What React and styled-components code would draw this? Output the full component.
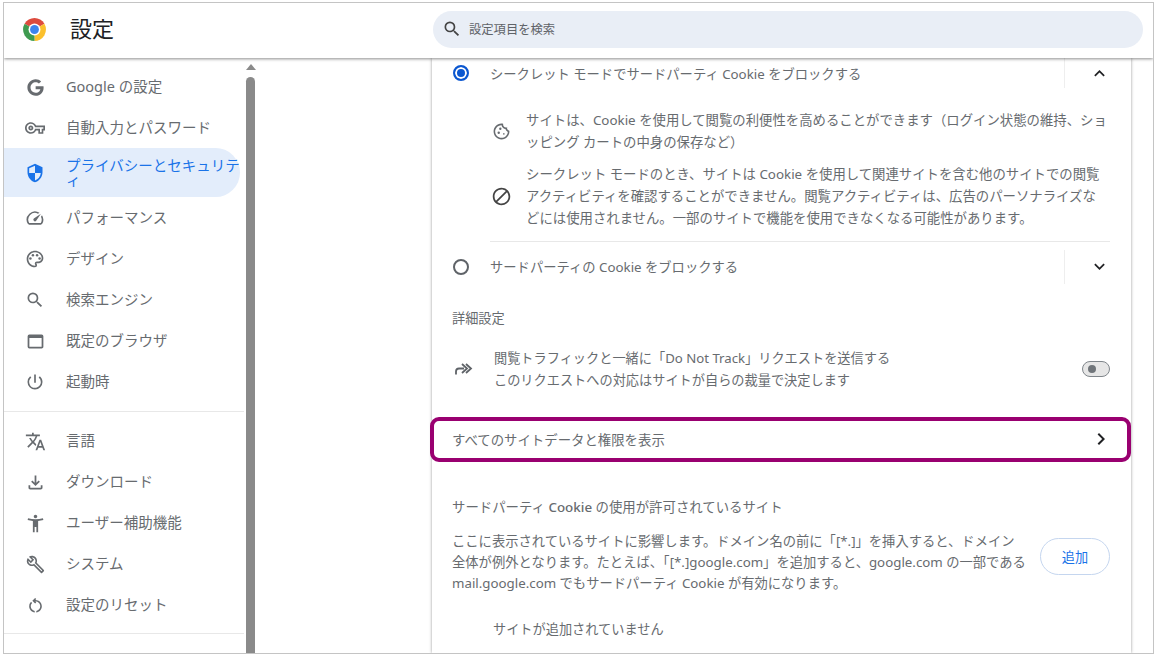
import React from "react";
import styled, { createGlobalStyle } from "styled-components";
import { FaGoogle } from "react-icons/fa";
import {
  MdOutlineVpnKey,
  MdSecurity,
  MdOutlineSpeed,
  MdOutlinePalette,
  MdSearch,
  MdOutlineWebAsset,
  MdOutlinePowerSettingsNew,
  MdTranslate,
  MdOutlineFileDownload,
  MdAccessibilityNew,
  MdOutlineBuild,
  MdOutlineRestartAlt,
  MdOutlineCookie,
  MdOutlineBlock,
  MdKeyboardArrowUp,
  MdKeyboardArrowDown,
  MdKeyboardArrowRight,
} from "react-icons/md";

const GlobalStyle = createGlobalStyle`
  html, body {
    margin: 0;
    padding: 0;
    background: #fff;
  }
  body {
    font-family: "Noto Sans", "Noto Sans CJK JP", sans-serif;
    color: #676b6f;
  }
`;

const topGroup = [
  { label: "Google の設定", icon: <FaGoogle size={17} /> },
  { label: "自動入力とパスワード", icon: <MdOutlineVpnKey size={20} /> },
  { label: "プライバシーとセキュリティ", icon: <MdSecurity size={20} />, active: true },
  { label: "パフォーマンス", icon: <MdOutlineSpeed size={20} /> },
  { label: "デザイン", icon: <MdOutlinePalette size={20} /> },
  { label: "検索エンジン", icon: <MdSearch size={20} /> },
  { label: "既定のブラウザ", icon: <MdOutlineWebAsset size={21} /> },
  { label: "起動時", icon: <MdOutlinePowerSettingsNew size={20} /> },
];

const bottomGroup = [
  { label: "言語", icon: <MdTranslate size={21} /> },
  { label: "ダウンロード", icon: <MdOutlineFileDownload size={21} /> },
  { label: "ユーザー補助機能", icon: <MdAccessibilityNew size={21} /> },
  { label: "システム", icon: <MdOutlineBuild size={19} /> },
  { label: "設定のリセット", icon: <MdOutlineRestartAlt size={19} /> },
];

const ChromeLogo = () => (
  <svg width="25" height="25" viewBox="0 0 48 48">
    <path d="M24 24 L4.95 13 A22 22 0 0 1 43.05 13 Z" fill="#dd4b3e" />
    <path d="M24 24 L43.05 13 A22 22 0 0 1 24 46 Z" fill="#fbc02d" />
    <path d="M24 24 L24 46 A22 22 0 0 1 4.95 13 Z" fill="#3f9b50" />
    <circle cx="24" cy="24" r="11.5" fill="#fff" />
    <circle cx="24" cy="24" r="8.5" fill="#3d84ee" />
  </svg>
);

const DoNotTrackIcon = () => (
  <svg width="22" height="22" viewBox="0 0 22 22" fill="none" stroke="#5f6368" strokeWidth="1.8">
    <path d="M4 16.5v-3a3 3 0 0 1 3-3h5" />
    <path d="M10 6l5 4.5-5 4.5" />
    <path d="M14 6l5 4.5-5 4.5" />
  </svg>
);

const NavItem = ({ item }) => (
  <NavRow $active={item.active}>
    <NavIcon>{item.icon}</NavIcon>
    <NavLabel $active={item.active}>{item.label}</NavLabel>
  </NavRow>
);

const App = () => (
  <>
    <GlobalStyle />
    <Frame>
      <Header>
        <Brand>
          <ChromeLogo />
          <Title>設定</Title>
        </Brand>
        <SearchBox>
          <MdSearch size={20} color="#444" />
          <SearchText>設定項目を検索</SearchText>
        </SearchBox>
      </Header>
      <Body>
        <Sidebar>
          <NavGroup>
            {topGroup.map((item) => (
              <NavItem key={item.label} item={item} />
            ))}
          </NavGroup>
          <NavDivider />
          <NavGroup>
            {bottomGroup.map((item) => (
              <NavItem key={item.label} item={item} />
            ))}
          </NavGroup>
          <NavDivider />
        </Sidebar>
        <ScrollTrack>
          <ScrollArrow />
          <ScrollThumb />
        </ScrollTrack>
        <Main>
          <Card>
            <RadioRow $height={30}>
              <Radio $checked />
              <RadioLabel>シークレット モードでサードパーティ Cookie をブロックする</RadioLabel>
              <RowAction>
                <MdKeyboardArrowUp size={21} color="#202124" />
              </RowAction>
            </RadioRow>
            <SubRow $top={22}>
              <SubIcon>
                <MdOutlineCookie size={19} />
              </SubIcon>
              <BodyText>
                サイトは、Cookie を使用して閲覧の利便性を高めることができます（ログイン状態の維持、ショ
                <br />
                ッピング カートの中身の保存など）
              </BodyText>
            </SubRow>
            <SubRow $top={11}>
              <SubIcon>
                <MdOutlineBlock size={21} color="#444" />
              </SubIcon>
              <BodyText>
                シークレット モードのとき、サイトは Cookie を使用して関連サイトを含む他のサイトでの閲覧
                <br />
                アクティビティを確認することができません。閲覧アクティビティは、広告のパーソナライズな
                <br />
                どには使用されません。一部のサイトで機能を使用できなくなる可能性があります。
              </BodyText>
            </SubRow>
            <RowDivider />
            <RadioRow $height={34} $top={8}>
              <Radio />
              <RadioLabel>サードパーティの Cookie をブロックする</RadioLabel>
              <RowAction>
                <MdKeyboardArrowDown size={21} color="#202124" />
              </RowAction>
            </RadioRow>
            <SectionLabel $top={23}>詳細設定</SectionLabel>
            <ToggleRow>
              <DoNotTrackIcon />
              <ToggleText>
                閲覧トラフィックと一緒に「Do Not Track」リクエストを送信する
                <br />
                このリクエストへの対応はサイトが自らの裁量で決定します
              </ToggleText>
              <Toggle>
                <ToggleKnob />
              </Toggle>
            </ToggleRow>
            <LinkRow>
              <LinkLabel>すべてのサイトデータと権限を表示</LinkLabel>
              <MdKeyboardArrowRight size={24} color="#202124" />
            </LinkRow>
            <SectionLabel $top={34} $wide>
              サードパーティ <Strong>Cookie</Strong> の使用が許可されているサイト
            </SectionLabel>
            <ExceptionRow>
              <Paragraph>
                ここに表示されているサイトに影響します。ドメイン名の前に「[*.]」を挿入すると、ドメイン
                <br />
                全体が例外となります。たとえば、「[*.]google.com」を追加すると、google.com の一部である
                <br />
                mail.google.com でもサードパーティ Cookie が有効になります。
              </Paragraph>
              <AddButton>追加</AddButton>
            </ExceptionRow>
            <EmptyText>サイトが追加されていません</EmptyText>
          </Card>
        </Main>
      </Body>
    </Frame>
  </>
);

const Frame = styled.div`
  box-sizing: border-box;
  width: 1151px;
  height: 652px;
  margin: 2px 0 0 3px;
  border: 1px solid #c4c4c4;
  display: flex;
  flex-direction: column;
  overflow: hidden;
`;

const Header = styled.header`
  flex: none;
  height: 55px;
  padding-bottom: 3px;
  box-sizing: border-box;
  display: flex;
  align-items: center;
  background: #fff;
  box-shadow: 0 1px 3px rgba(0, 0, 0, 0.45);
  position: relative;
  z-index: 2;
`;

const Brand = styled.div`
  width: 429px;
  padding-left: 18px;
  box-sizing: border-box;
  display: flex;
  align-items: center;
  gap: 23px;
`;

const Title = styled.h1`
  margin: 0 0 4px;
  font-size: 22px;
  font-weight: 400;
  color: #202124;
`;

const SearchBox = styled.div`
  width: 710px;
  height: 37px;
  padding-left: 9px;
  box-sizing: border-box;
  display: flex;
  align-items: center;
  gap: 7px;
  border-radius: 19px;
  background: #e9eef6;
`;

const SearchText = styled.span`
  font-size: 12.3px;
  color: #5f6368;
`;

const Body = styled.div`
  flex: 1;
  min-height: 0;
  display: flex;
`;

const Sidebar = styled.nav`
  flex: none;
  width: 241px;
  padding-top: 8px;
  box-sizing: border-box;
`;

const NavGroup = styled.div`
  display: flex;
  flex-direction: column;
`;

const NavRow = styled.div`
  width: 236px;
  height: ${(p) => (p.$active ? 49 : 41)}px;
  box-sizing: border-box;
  padding-top: ${(p) => (p.$active ? 0 : 1)}px;
  display: flex;
  align-items: center;
  border-radius: 0 25px 25px 0;
  background: ${(p) => (p.$active ? "#e3edfb" : "transparent")};
  color: ${(p) => (p.$active ? "#1a73e8" : "#676b6f")};
`;

const NavIcon = styled.span`
  flex: none;
  width: 62px;
  display: flex;
  justify-content: center;
`;

const NavLabel = styled.span`
  padding-bottom: ${(p) => (p.$active ? 0 : 2)}px;
  font-size: 14.5px;
  line-height: 15px;
`;

const NavDivider = styled.div`
  width: 240px;
  height: 1px;
  margin: 9px 0 8px;
  background: #e8e8e8;

  &:last-child {
    margin-top: 8px;
  }
`;

const ScrollTrack = styled.div`
  flex: none;
  width: 9px;
  margin-left: 1px;
  display: flex;
  flex-direction: column;
  align-items: center;
  padding-top: 6px;
`;

const ScrollArrow = styled.div`
  width: 0;
  height: 0;
  border-left: 5px solid transparent;
  border-right: 5px solid transparent;
  border-bottom: 6px solid #8a8a8a;
`;

const ScrollThumb = styled.div`
  flex: 1;
  width: 9px;
  margin-top: 7px;
  border-radius: 5px 5px 0 0;
  background: #8a8a8a;
`;

const Main = styled.main`
  flex: 1;
  min-width: 0;
  padding-left: 177px;
`;

const Card = styled.section`
  box-sizing: border-box;
  width: 699px;
  height: 100%;
  padding: 0 21px 0 20px;
  background: #fff;
  box-shadow: 0 0 3px rgba(0, 0, 0, 0.4);
`;

const RadioRow = styled.div`
  height: ${(p) => p.$height}px;
  margin-top: ${(p) => p.$top || 0}px;
  display: flex;
  align-items: center;
`;

const Radio = styled.span`
  flex: none;
  box-sizing: border-box;
  width: 16px;
  height: 16px;
  margin-left: 1px;
  border-radius: 50%;
  border: 2px solid ${(p) => (p.$checked ? "#0b57d0" : "#5f6368")};
  background: ${(p) => (p.$checked ? "#0b57d0" : "transparent")};
  box-shadow: ${(p) => (p.$checked ? "inset 0 0 0 2px #fff" : "none")};
`;

const RadioLabel = styled.span`
  flex: 1;
  margin-left: 21px;
  font-size: 13.3px;
`;

const RowAction = styled.div`
  flex: none;
  box-sizing: border-box;
  width: 46px;
  padding-left: 24px;
  align-self: stretch;
  display: flex;
  align-items: center;
  justify-content: center;
  border-left: 1px solid #eeeeee;
`;

const SubRow = styled.div`
  margin: ${(p) => p.$top}px 0 0 38px;
  display: flex;
  align-items: center;
`;

const SubIcon = styled.span`
  flex: none;
  width: 22px;
  margin-right: 14px;
  display: flex;
  justify-content: center;
`;

const BodyText = styled.p`
  margin: 0;
  font-size: 13.38px;
  line-height: 21.7px;
  white-space: nowrap;
`;

const RowDivider = styled.div`
  height: 1px;
  margin: 11px 0 0 38px;
  background: #e8e8e8;
`;

const SectionLabel = styled.div`
  margin-top: ${(p) => p.$top}px;
  font-size: ${(p) => (p.$wide ? 13.4 : 13.2)}px;
  line-height: 22px;
`;

const Strong = styled.span`
  font-weight: 500;
`;

const ToggleRow = styled.div`
  margin-top: 18px;
  display: flex;
  align-items: center;
`;

const ToggleText = styled.p`
  flex: 1;
  margin: 0 0 0 20px;
  font-size: 13.2px;
  line-height: 22px;
`;

const Toggle = styled.span`
  flex: none;
  box-sizing: border-box;
  width: 28px;
  height: 16px;
  padding-left: 5px;
  display: flex;
  align-items: center;
  border: 1px solid #80868b;
  border-radius: 8px;
  background: #e6e6e6;
`;

const ToggleKnob = styled.span`
  width: 8px;
  height: 8px;
  border-radius: 50%;
  background: #70757a;
`;

const LinkRow = styled.div`
  box-sizing: border-box;
  height: 45px;
  margin: 26px -21px 0 -22px;
  padding: 0 14px 0 18px;
  display: flex;
  align-items: center;
  justify-content: space-between;
  border: 4px solid #990070;
  border-radius: 9px;
  background: #fff;
`;

const LinkLabel = styled.span`
  font-size: 13.4px;
`;

const ExceptionRow = styled.div`
  margin-top: 13px;
  display: flex;
  align-items: flex-start;
  justify-content: space-between;
`;

const Paragraph = styled.p`
  margin: 0;
  font-size: 13.3px;
  line-height: 21px;
  white-space: nowrap;
`;

const AddButton = styled.button`
  box-sizing: border-box;
  width: 70px;
  height: 37px;
  margin-top: 7px;
  padding: 0;
  border: 1px solid #c5d6ef;
  border-radius: 19px;
  background: #fff;
  color: #1a73e8;
  font-family: inherit;
  font-size: 13.2px;
`;

const EmptyText = styled.div`
  margin: 24px 0 0 41px;
  font-size: 13.2px;
  line-height: 22px;
`;

export default App;
